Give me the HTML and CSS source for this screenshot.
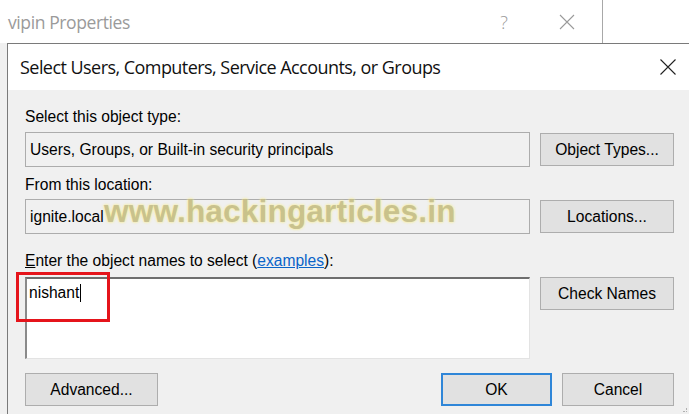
FILE: index.html
```html
<!DOCTYPE html>
<html>
<head>
<meta charset="utf-8">
<link rel="stylesheet" href="styles.css">
</head>
<body>
<div class="screen">
  <div class="parent-bar">
    <div class="parent-title">vipin Properties</div>
    <div class="parent-help">?</div>
    <div class="parent-close">
      <svg width="16" height="16" viewBox="0 0 16 16"><path d="M1 1 L15 15 M15 1 L1 15" stroke="#9a9a9a" stroke-width="1.1" fill="none"/></svg>
    </div>
    <div class="parent-edge"></div>
  </div>
  <div class="lower">
    <div class="dialog">
      <div class="dlg-title">
        <span class="dlg-title-text">Select Users, Computers, Service Accounts, or Groups</span>
        <span class="dlg-close">
          <svg width="16" height="16" viewBox="0 0 16 16"><path d="M0.5 0.5 L15.5 15.5 M15.5 0.5 L0.5 15.5" stroke="#222" stroke-width="1.1" fill="none"/></svg>
        </span>
      </div>
      <div class="dlg-body">
        <div class="label l1">Select this object type:</div>
        <div class="row r1">
          <div class="field">Users, Groups, or Built-in security principals</div>
          <div class="btn">Object Types...</div>
        </div>
        <div class="label l2">From this location:</div>
        <div class="row r2">
          <div class="field">ignite.local</div>
          <div class="btn">Locations...</div>
        </div>
        <div class="label l3"><u>E</u>nter the object names to select (<a class="link">examples</a>):</div>
        <div class="row r3">
          <div class="area"><span class="typed">nishant</span><span class="caret"></span></div>
          <div class="btn">Check Names</div>
        </div>
        <div class="bottom">
          <div class="btn adv">Advanced...</div>
          <div class="spacer"></div>
          <div class="btn ok">OK</div>
          <div class="btn cancel">Cancel</div>
        </div>
        <div class="grip"></div>
      </div>
    </div>
    <div class="highlight"></div>
    <div class="watermark">www.hackingarticles.in</div>
  </div>
</div>
</body>
</html>
```
FILE: styles.css
```css
* { box-sizing: border-box; }
html, body { margin: 0; padding: 0; }
body {
  width: 689px;
  height: 414px;
  overflow: hidden;
  background: #ffffff;
  font-family: "Liberation Sans", Arial, sans-serif;
}
.screen {
  position: relative;
  width: 689px;
  height: 414px;
}
.parent-bar {
  height: 43px;
  display: flex;
  align-items: center;
  background: #ffffff;
}
.parent-title {
  width: 496px;
  padding-left: 8px;
  font-family: "Open Sans", "Noto Sans", sans-serif;
  font-size: 17.5px;
  color: #9a9a9a;
  letter-spacing: -0.4px;
}
.parent-help {
  width: 16px;
  text-align: center;
  font-family: "Open Sans", sans-serif;
  font-size: 18px;
  font-weight: 300;
  color: #9a9a9a;
}
.parent-close {
  margin-left: 47px;
  width: 16px;
  height: 16px;
  display: flex;
}
.parent-edge {
  margin-left: 27px;
  align-self: stretch;
  width: 1px;
  background: #a8a8a8;
}
.lower {
  position: relative;
  height: 371px;
  background: #f0f0f0;
  padding-left: 7px;
}
.dialog {
  height: 100%;
  border-top: 1px solid #7a7a7a;
  border-left: 1px solid #7a7a7a;
  margin-right: -1px;
  display: flex;
  flex-direction: column;
}
.dlg-title {
  height: 46px;
  background: #ffffff;
  display: flex;
  align-items: center;
  padding-left: 12px;
}
.dlg-title-text {
  font-family: "Open Sans", "Noto Sans", sans-serif;
  font-size: 18px;
  color: #111;
  letter-spacing: -0.55px;
  flex: 1;
}
.dlg-close {
  width: 16px;
  height: 16px;
  display: flex;
  margin-right: 14px;
}
.dlg-body {
  position: relative;
  flex: 1;
  background: #f0f0f0;
  padding-left: 17px;
  padding-top: 18px;
  font-size: 15.6px;
  color: #000;
}
.label {
  height: 18px;
  line-height: 18px;
}
.l1 { margin-bottom: 6px; }
.l2 { margin-top: 9px; margin-bottom: 5px; }
.l3 { margin-top: 18px; margin-bottom: 7px; }
.link { color: #0a64c8; text-decoration: underline; }
.row {
  display: grid;
  grid-template-columns: 505px 134px;
  column-gap: 10px;
}
.r1, .r2 { align-items: center; }
.r3 { align-items: start; }
.field {
  height: 35px;
  border: 1px solid #acacac;
  background: #f0f0f0;
  padding-left: 4px;
  display: flex;
  align-items: center;
}
.btn {
  height: 33px;
  border: 1px solid #adadad;
  background: #e1e1e1;
  display: flex;
  align-items: center;
  justify-content: center;
}
.area {
  height: 82px;
  background: #ffffff;
  border-top: 2px solid #6e6e6e;
  border-left: 2px solid #8a8a8a;
  border-right: 1px solid #e3e3e3;
  border-bottom: 1px solid #e3e3e3;
  padding: 5px 0 0 2px;
  display: flex;
  align-items: flex-start;
}
.typed { line-height: 18px; }
.caret {
  width: 1px;
  height: 18px;
  background: #000;
  margin-left: 1px;
}
.bottom {
  margin-top: 14px;
  display: flex;
  width: 649px;
}
.adv { width: 133px; }
.spacer { flex: 1; }
.ok {
  width: 111px;
  border: 2px solid #2f86d8;
}
.cancel {
  width: 112px;
  margin-left: 10px;
}
.grip {
  position: absolute;
  right: 3px;
  bottom: 2px;
  width: 4px;
  height: 4px;
  border-right: 1px dotted #b0b0b0;
  border-bottom: 1px dotted #b0b0b0;
}
.highlight {
  position: absolute;
  left: 16px;
  top: 229px;
  width: 94px;
  height: 50px;
  border: 3px solid #e5141b;
}
.watermark {
  position: absolute;
  left: 104px;
  top: 150px;
  font-family: "Liberation Sans", Arial, sans-serif;
  font-weight: bold;
  font-size: 31.5px;
  color: rgba(160, 155, 128, 0.55);
  text-shadow: 0 0 3px rgba(250, 240, 150, 0.9), 0 0 2px rgba(250, 240, 150, 0.9);
  letter-spacing: 0.2px;
  pointer-events: none;
}
```
